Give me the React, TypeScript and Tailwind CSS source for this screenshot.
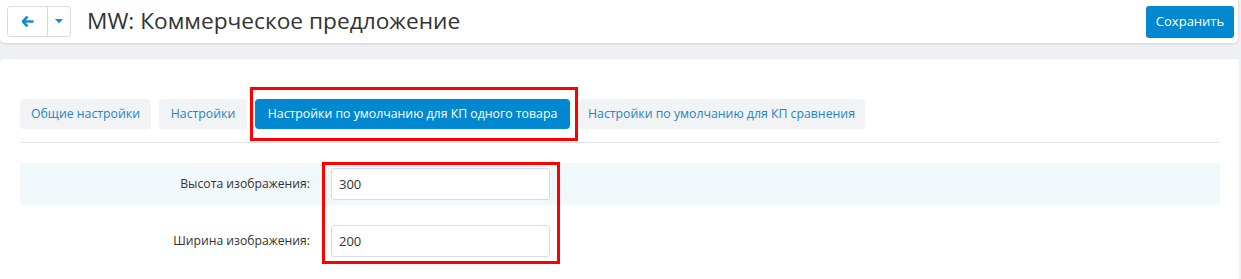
import React from 'react';

const tabs = [
    { label: 'Общие настройки', width: 'w-[131px]', active: false },
    { label: 'Настройки', width: 'w-[88px]', active: false },
    { label: 'Настройки по умолчанию для КП одного товара', width: 'w-[315px]', active: true },
    { label: 'Настройки по умолчанию для КП сравнения', width: 'w-[287px]', active: false },
];

function FieldRow({ label, value, shaded }: { label: string; value: string; shaded?: boolean }) {
    return (
        <div className={`flex items-center h-[42px] ${shaded ? 'bg-[#f1f8fc]' : ''}`}>
            <div className="w-[290px] text-right text-[12.2px] text-[#333]">{label}</div>
            <input
                className="ml-[21px] w-[219px] h-[32px] border border-[#d5dce4] rounded-[3px] px-[7px] text-[13px] text-[#333] bg-white outline-none"
                defaultValue={value}
            />
        </div>
    );
}

export default function App() {
    return (
        <div
            className="relative w-[1241px] h-[279px] bg-[#eef0f3] overflow-hidden flex flex-col"
            style={{ fontFamily: '"Open Sans", "Noto Sans", sans-serif' }}
        >
            {/* Header */}
            <div className="h-[43px] w-[1238px] bg-white rounded-b-[5px] shadow-[0_1px_3px_rgba(0,0,0,0.12)] flex items-center pl-[7px] pr-[4px] shrink-0">
                <div className="flex h-[31px] w-[64px] border border-[#d5dce4] rounded-[3px]">
                    <div className="w-[40px] flex items-center justify-center border-r border-[#d5dce4]">
                        <svg width="12" height="11" viewBox="0 0 12 11">
                            <path d="M5.5 0.5 L0.8 5.5 L5.5 10.5 M1.2 5.5 H11.5" stroke="#1b8ad3" strokeWidth="2.6" fill="none" strokeLinejoin="round" />
                        </svg>
                    </div>
                    <div className="flex-1 flex items-center justify-center">
                        <svg width="8" height="5" viewBox="0 0 8 5">
                            <path d="M0 0 H8 L4 4.5 Z" fill="#1b8ad3" />
                        </svg>
                    </div>
                </div>
                <h1 className="ml-[16px] text-[22.7px] text-[#333] leading-none">MW: Коммерческое предложение</h1>
                <button className="ml-auto w-[88px] h-[32px] rounded-[3px] bg-[#0288d1] text-white text-[13px]">
                    Сохранить
                </button>
            </div>

            {/* Content */}
            <div className="mt-[16px] w-[1239px] flex-1 bg-white rounded-t-[4px] px-[20px] pt-[40px]">
                <div className="flex gap-[8px]">
                    {tabs.map((t) => (
                        <div
                            key={t.label}
                            className={`${t.width} h-[30px] flex items-center justify-center rounded-[4px] text-[12.3px] whitespace-nowrap ${
                                t.active ? 'bg-[#0288d1] text-white' : 'bg-[#f2f3f5] text-[#2385c7]'
                            }`}
                        >
                            {t.label}
                        </div>
                    ))}
                </div>
                <div className="mt-[13px] h-px w-[1200px] bg-[#e3e8ee]" />
                <div className="mt-[20px] w-[1200px]">
                    <FieldRow label="Высота изображения:" value="300" shaded />
                    <div className="mt-[15px]">
                        <FieldRow label="Ширина изображения:" value="200" />
                    </div>
                </div>
            </div>

            {/* Annotation frames */}
            <div className="absolute left-[250px] top-[87px] w-[328px] h-[54px] border-[3px] border-[#ff0000]" />
            <div className="absolute left-[322px] top-[162px] w-[238px] h-[102px] border-[3px] border-[#ff0000]" />
        </div>
    );
}
